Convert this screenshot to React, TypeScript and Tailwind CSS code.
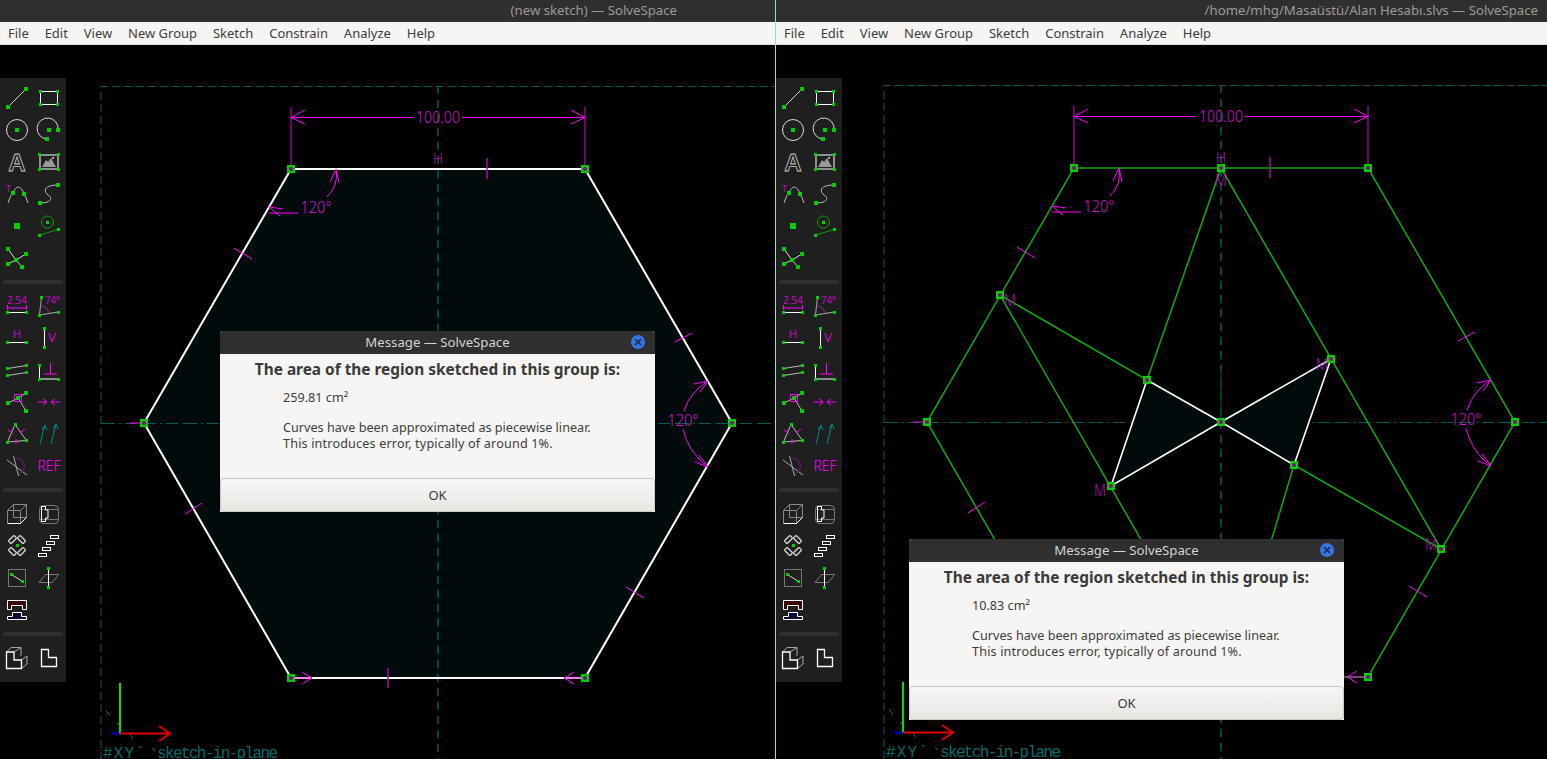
import type { ReactNode } from "react";

const G = "#00d000";
const MAG = "#ff00ff";
const DIM = "#b012b0";
const TEAL = "#0a5a5a";
const SANS = "'Noto Sans', 'Open Sans', sans-serif";

function H({ x, y, s = 4 }: { x: number; y: number; s?: number }) {
  return <rect x={x - s / 2} y={y - s / 2} width={s} height={s} fill={G} shapeRendering="crispEdges" />;
}

function L({ d, c = "#d8d8d8", w = 1 }: { d: string; c?: string; w?: number }) {
  return <path d={d} fill="none" stroke={c} strokeWidth={w} />;
}

function Lbl({ x, y, size, len, children, anchor = "middle" }: { x: number; y: number; size: number; len?: number; children: ReactNode; anchor?: "middle" | "start" }) {
  return (
    <text x={x} y={y} fontSize={size} fill={MAG} textAnchor={anchor} fontFamily="'Noto Sans', sans-serif" fontWeight={300} textLength={len} lengthAdjust="spacingAndGlyphs">
      {children}
    </text>
  );
}

const ICONS: (ReactNode | null)[] = [
  <><L d="M3 21L21 3" /><H x={3} y={21} /><H x={21} y={3} /></>,
  <><L d="M3.5 5.5H20.5V18.5H3.5Z" c="#fff" /><H x={3.5} y={5} s={3} /><H x={20.5} y={5} s={3} /><H x={3.5} y={18.5} s={3} /><H x={20.5} y={18.5} s={3} /></>,
  <><circle cx={12} cy={12} r={10.5} fill="none" stroke="#d8d8d8" /><H x={12} y={12} /></>,
  <><L d="M10 21A10.5 10.5 0 1 1 21 12" /><H x={12} y={12} /><H x={10} y={21} /><H x={21} y={12} /></>,
  <text x={12} y={21} fontSize={24} fontWeight={700} textAnchor="middle" fill="#1f1f1f" stroke="#c8c8c8" strokeWidth={0.8} fontFamily="'Liberation Sans', sans-serif">A</text>,
  <><path d="M5 17L9 10L11 12L14 8L19 17Z" fill="#9a9a9a" /><rect x={3} y={5} width={18} height={14} fill="none" stroke="#fff" /><rect x={15} y={7} width={2} height={2} fill="#aaa" /><H x={2.5} y={4.5} s={3} /><H x={21.5} y={4.5} s={3} /><H x={2.5} y={19.5} s={3} /><H x={21.5} y={19.5} s={3} /></>,
  <><Lbl x={3.5} y={10} size={9}>T</Lbl><L d="M3 21Q6 12 8 11C11 3 16 3 19 12Q21 15 23 21" c="#bbb" /><H x={8} y={11} /><H x={19} y={12} /></>,
  <><L d="M3 21C16 21 15 15 11 13C5 8 9 3 21 3" c="#bbb" /><H x={3} y={21} /><H x={21} y={3} /></>,
  <H x={12} y={12} s={6} />,
  <><circle cx={10.5} cy={8} r={6} fill="none" stroke="#0a9a0a" /><H x={10.5} y={8} s={3} /><L d="M2.5 21L21.5 15.5" c="#0a9a0a" /><H x={2.5} y={21} s={3} /><H x={21.5} y={15.5} s={3} /></>,
  <><L d="M3 3L11 14L3 18M11 14L21 8M11 14L17 21" /><H x={3} y={3} /><H x={21} y={8} /><H x={3} y={18} /><H x={17} y={21} /><H x={11} y={14} /></>,
  null,
  <><Lbl x={12} y={11} size={11} len={20}>2.54</Lbl><L d="M2.5 12V17M21.5 12V17M2.5 15H21.5" c={MAG} /><L d="M2.5 19.5H21.5" c="#fff" /><H x={2.5} y={19.5} s={3} /><H x={21.5} y={19.5} s={3} /></>,
  <><L d="M4.5 4L2.5 22L21.5 19" c="#aaa" /><path d="M3.5 13Q10 13 12 20" fill="none" stroke="#a020a0" /><Lbl x={8} y={11} size={11} len={15} anchor="start">74°</Lbl><H x={4.5} y={4} s={3} /><H x={2.5} y={22} s={3} /><H x={21.5} y={19} s={3} /></>,
  <><Lbl x={12} y={13} size={11}>H</Lbl><L d="M2.5 17.5H21.5" c="#fff" /><H x={2.5} y={17.5} s={3} /><H x={21.5} y={17.5} s={3} /></>,
  <><L d="M7.5 3.5V22.5" c="#fff" /><Lbl x={15} y={17} size={13}>V</Lbl><H x={7.5} y={3.5} s={3} /><H x={7.5} y={22.5} s={3} /></>,
  <><L d="M2.5 11.5L21.5 8.5M2.5 18.5L21.5 15.5" c="#bbb" /><H x={2.5} y={11.5} s={3} /><H x={21.5} y={8.5} s={3} /><H x={2.5} y={18.5} s={3} /><H x={21.5} y={15.5} s={3} /></>,
  <><L d="M2.5 8V22H21.5" c="#fff" /><L d="M7 17H20M13.5 6V17" c={MAG} /><H x={2.5} y={8} s={3} /><H x={2.5} y={22} s={3} /><H x={21.5} y={22} s={3} /></>,
  <><L d="M3 14L13 9L21 22M13 9L21 4" c="#bbb" /><rect x={9.5} y={5.5} width={7} height={7} fill="none" stroke={MAG} /><H x={13} y={9} /><H x={21} y={4} /><H x={3} y={14} /><H x={21} y={22} /></>,
  <><L d="M1 13H10M6 9.5L10 13L6 16.5M23 13H14M18 9.5L14 13L18 16.5" c={MAG} /></>,
  <><L d="M10 3.5L2.5 21L21.5 19.5Z" c="#bbb" /><L d="M3 9L8 12M15 12L20 8M11 18V23" c={MAG} /><H x={10.5} y={3.5} s={3} /><H x={2.5} y={21} s={3} /><H x={21.5} y={19.5} s={3} /></>,
  <><L d="M3 23L8 4M5 9L8 4L10 9M14 23L19 3M16 8L19 3L21 8" c="#008a8a" /></>,
  <><L d="M2 7L22 22M8.5 3L13.5 23" c="#aaa" /><path d="M12 5.5A8 8 0 0 1 14 21" fill="none" stroke="#901090" /></>,
  <Lbl x={12} y={18} size={15} len={23}>REF</Lbl>,
  <><L d="M2.5 8.5H15.5V21.5H2.5ZM8.5 2.5H21.5V15.5H8.5ZM2.5 8.5L8.5 2.5M15.5 8.5L21.5 2.5M15.5 21.5L21.5 15.5" c="#888" /><L d="M2.5 21.5H15.5L21.5 15.5" c="#fff" /></>,
  <><rect x={2.5} y={3.5} width={19} height={18} rx={4} fill="none" stroke="#777" /><L d="M2.5 7.5H21.5M2.5 17.5H21.5" c="#777" /><L d="M8.5 4.5H4.5V19.5H8.5V16H11V8H8.5Z" c="#fff" /></>,
  <><g fill="none" stroke="#d8d8d8" strokeWidth={1.3}><rect x={3.5} y={3.5} width={8} height={4} rx={1} transform="rotate(-45 7.5 5.5)" /><rect x={12.5} y={3.5} width={8} height={4} rx={1} transform="rotate(45 16.5 5.5)" /><rect x={3.5} y={15.5} width={8} height={4} rx={1} transform="rotate(45 7.5 17.5)" /><rect x={12.5} y={15.5} width={8} height={4} rx={1} transform="rotate(-45 16.5 17.5)" /></g><H x={12} y={11.5} s={3} /></>,
  <g fill="none" stroke="#fff"><rect x={13.5} y={1.5} width={8} height={3} /><rect x={9.5} y={7.5} width={8} height={3} /><rect x={5.5} y={13.5} width={8} height={3} /><rect x={1.5} y={19.5} width={8} height={3} /></g>,
  <><rect x={3.5} y={3.5} width={17} height={17} fill="none" stroke="#777" /><L d="M6.5 8.5L17.5 15.5" c="#ddd" /><H x={6.5} y={8.5} s={3} /><H x={17.5} y={15.5} s={3} /></>,
  <><path d="M8.7 8.5H21.7L15.3 16.5H2Z" fill="none" stroke="#777" /><L d="M11.5 2.5V21.5" c="#fff" /><H x={11.5} y={2.5} s={3} /><H x={11.5} y={21.5} s={3} /></>,
  <g stroke="#fff"><path d="M2.5 2.5H21.5V11.5H17.5V7.5H6.5V11.5H2.5Z" fill="#3a0808" /><path d="M7.5 14.5H16.5V18.5H21.5V21.5H2.5V18.5H7.5Z" fill="#08083a" /></g>,
  null,
  <><L d="M1.5 6L6 1.5H16V10" c="#aaa" /><L d="M16.5 22.5L22 18V10L16.5 14M9 6L16 1.5" c="#aaa" /><path d="M1.5 6H9V14H16.5V22.5H1.5Z" fill="none" stroke="#fff" strokeWidth={1.3} /></>,
  <path d="M4.5 3.5H11.5V11.5H19.5V20.5H4.5Z" fill="none" stroke="#fff" strokeWidth={1.3} />,
];

function IconGrid({ from, to }: { from: number; to: number }) {
  return (
    <div className="grid grid-cols-[32px_32px] auto-rows-[32px]">
      {ICONS.slice(from, to).map((icon, i) => (
        <div key={i} className="flex items-center justify-center">
          {icon && (
            <svg width={24} height={24} viewBox="0 0 24 24" className="overflow-visible">
              {icon}
            </svg>
          )}
        </div>
      ))}
    </div>
  );
}

function Toolbar() {
  return (
    <div className="absolute left-0 top-[33px] w-[66px] bg-[#1f1f1f] px-px pt-1 pb-2">
      <IconGrid from={0} to={12} />
      <div className="mx-[2px] mt-[6px] mb-[5px] h-1 bg-[#2f2f2f]" />
      <IconGrid from={12} to={24} />
      <div className="mx-[2px] mt-[7px] mb-[6px] h-1 bg-[#2f2f2f]" />
      <IconGrid from={24} to={32} />
      <div className="mx-[2px] mt-[6px] mb-[6px] h-1 bg-[#2f2f2f]" />
      <IconGrid from={32} to={34} />
    </div>
  );
}

function Handle({ x, y }: { x: number; y: number }) {
  return (
    <g>
      <rect x={x - 4} y={y - 4} width={8} height={8} fill={G} shapeRendering="crispEdges" />
      <circle cx={x} cy={y} r={2} fill="#8a0a8a" />
    </g>
  );
}

function Sk({ x, y, size = 17, len, c = DIM, children }: { x: number; y: number; size?: number; len?: number; c?: string; children: ReactNode }) {
  return (
    <text x={x} y={y} fontSize={size} fill={c} textAnchor="middle" fontFamily="'Noto Sans', sans-serif" fontWeight={300} textLength={len} lengthAdjust="spacingAndGlyphs">
      {children}
    </text>
  );
}

// same constraint drawing in both windows, left window coordinates
function Constraints({ edge, wide }: { edge: string; wide: boolean }) {
  return (
    <>
      <path d="M101 760V86.5H776" fill="none" stroke={TEAL} strokeDasharray="8 4" />
      <path d="M438 86V760" fill="none" stroke={TEAL} strokeWidth={1.5} strokeDasharray="8 6" />
      <path d="M101 423.5H776" fill="none" stroke={TEAL} strokeDasharray="14 4 2 4 12 5" />
      <path d="M291 169H585L732 423L585 678H291L144 423Z" fill="none" stroke={edge} strokeWidth={wide ? 2 : 1.6} />

      <path d="M291 107V169M585 107V169" stroke="#8a0a8a" strokeWidth={1.5} />
      <path d="M291 117.5H413M462 117.5H585M305 110L291 117.5L305 124M571 110L585 117.5L571 124" fill="none" stroke={MAG} />
      <Sk x={438} y={123} size={17} len={44} c="#d018d0">100.00</Sk>
      <Sk x={438} y={164} size={15} len={10}>H</Sk>
      <path d="M487 158V179" stroke="#a010a0" strokeWidth={1.5} />

      <path d="M298 213H269M269 207L283 209M269 207L280 216M327 197Q339 185 336 169M336 169L330 182M336 169L339 183" fill="none" stroke={MAG} />
      <Sk x={316} y={213} len={31} c="#d018d0">120°</Sk>

      <path d="M684 411Q690 392 708 381M708 381L694 384M708 381L700 392M683 429Q688 452 708 467M708 467L695 462M708 467L699 455" fill="none" stroke={MAG} />
      <Sk x={683} y={426} len={31} c="#d018d0">120°</Sk>

      <path d="M234 248L252 259M675 342L692 333M185 514L202 503M626 587L644 598" stroke={MAG} />
      <path d="M388 668V688" stroke="#a010a0" strokeWidth={1.5} />
      <path d="M291 678H312M302 672L312 678L302 684M585 678H564M574 672L564 678L574 684M130 423H144" fill="none" stroke={MAG} />

      <path d="M106 711L110 715M117 723L120 726M130 735L133 738M152 748L155 751" stroke="#3a6a6a" />
      <path d="M111 733.5H120" stroke="#0000d0" strokeWidth={2} />
      <path d="M120 683V733" stroke="#00e000" strokeWidth={2} />
      <path d="M120 733.5H169M159 726L170 733.5L159 741" fill="none" stroke="#e00000" strokeWidth={2} />
      <text x={103} y={758} fontSize={16} fill="#0a6a6a" fontFamily="'Liberation Mono', monospace" textLength={42}>#XY`</text>
      <text x={157} y={758} fontSize={16} fill="#0a6a6a" fontFamily="'Liberation Mono', monospace" textLength={121}>sketch-in-plane</text>

      <Handle x={291} y={169} />
      <Handle x={585} y={169} />
      <Handle x={732} y={423} />
      <Handle x={585} y={678} />
      <Handle x={291} y={678} />
      <Handle x={144} y={423} />
    </>
  );
}

function LeftSketch() {
  return (
    <svg className="absolute inset-0" width={775} height={714} viewBox="0 45 775 714">
      <path d="M291 169H585L732 423L585 678H291L144 423Z" fill="#020b0c" />
      <Constraints edge="#ffffff" wide />
    </svg>
  );
}

function RightSketch() {
  return (
    <svg className="absolute inset-0" width={771} height={714} viewBox="776 45 771 714">
      <g transform="translate(783 -1)">
        <Constraints edge="#14a014" wide={false} />
      </g>
      <path d="M1221 422V370" stroke="#004000" strokeWidth={1.5} />
      <path d="M1221 422H1272M1263 415L1272 422L1263 429" fill="none" stroke="#600000" />
      <path d="M1147 380L1221 422L1331 359L1294 465L1221 422L1111 486Z" fill="#020b0c" />
      <path d="M1000 295L1147 380M1221 168L1147 380M1221 168L1441 549M1000 295L1147 550M1294 465L1441 549M1294 465L1270 545" fill="none" stroke="#14a014" strokeWidth={1.6} />
      <path d="M1147 380L1221 422L1331 359L1294 465L1221 422L1111 486Z" fill="none" stroke="#fff" strokeWidth={1.6} />
      <Handle x={1000} y={295} />
      <Handle x={1147} y={380} />
      <Handle x={1221} y={168} />
      <Handle x={1221} y={422} />
      <Handle x={1331} y={359} />
      <Handle x={1294} y={465} />
      <Handle x={1111} y={486} />
      <Handle x={1441} y={549} />
      <Sk x={1010} y={306} len={12}>M</Sk>
      <Sk x={1221} y={186} len={12}>M</Sk>
      <Sk x={1322} y={370} len={12}>M</Sk>
      <Sk x={1100} y={496} len={12}>M</Sk>
      <Sk x={1431} y={550} len={12}>M</Sk>
    </svg>
  );
}

function Dialog({ area, className }: { area: string; className: string }) {
  return (
    <div className={`absolute flex h-[181px] w-[435px] flex-col overflow-hidden rounded-t-[3px] bg-[#f6f5f4] ${className}`}>
      <div className="relative flex h-[23px] items-center justify-center bg-[#2f2f2f] text-[13.2px] text-[#d6d5d2]">
        Message — SolveSpace
        <span className="absolute right-[10px] top-[4px] flex h-[14px] w-[14px] items-center justify-center rounded-full bg-[#3574e2]">
          <svg width={8} height={8} viewBox="0 0 8 8">
            <path d="M1 1L7 7M7 1L1 7" stroke="#1d2a44" strokeWidth={1.6} />
          </svg>
        </span>
      </div>
      <div className="mt-[6px] text-center text-[15.4px] font-bold leading-5 text-[#3a3a3a]">The area of the region sketched in this group is:</div>
      <div className="mt-[9px] pl-[63px] text-[12.65px] leading-4 text-[#3d3d3d]">
        <p>{area}</p>
        <p className="mt-[14px]">Curves have been approximated as piecewise linear.</p>
        <p className="tracking-[0.15px]">This introduces error, typically of around 1%.</p>
      </div>
      <button className="mt-auto h-[34px] rounded-[4px] border border-[#cdc7c2] bg-gradient-to-b from-[#f7f6f5] to-[#e8e6e3] pt-px text-[13px] text-[#3a3a3a]">OK</button>
    </div>
  );
}

function SsWindow({ title, titleClass, className, sketch, dialog }: { title: string; titleClass: string; className: string; sketch: ReactNode; dialog: ReactNode }) {
  const menus = ["File", "Edit", "View", "New Group", "Sketch", "Constrain", "Analyze", "Help"];
  return (
    <div className={`flex h-full flex-col ${className}`} style={{ fontFamily: SANS }}>
      <div className={`flex h-[22px] shrink-0 items-center justify-end bg-[#2f2f2f] text-[13.2px] text-[#9c9a96] ${titleClass}`}>{title}</div>
      <div className="flex h-[23px] shrink-0 items-center gap-[15.85px] border-b border-[#dedcd9] bg-[#f6f5f4] pl-2 pt-[2px] text-[13px] text-[#3d3d3d]">
        {menus.map((m) => (
          <span key={m}>{m}</span>
        ))}
      </div>
      <div className="relative flex-1 overflow-hidden bg-black">
        {sketch}
        <Toolbar />
        {dialog}
      </div>
    </div>
  );
}

export default function App() {
  return (
    <div className="flex h-[759px] w-[1547px] overflow-hidden bg-black">
      <SsWindow
        className="w-[775px]"
        title="(new sketch) — SolveSpace"
        titleClass="pr-[98px]"
        sketch={<LeftSketch />}
        dialog={<Dialog area="259.81 cm²" className="left-[220px] top-[286px]" />}
      />
      <div className="w-px shrink-0 bg-[#86e8bc]" />
      <SsWindow
        className="w-[771px]"
        title="/home/mhg/Masaüstü/Alan Hesabı.slvs — SolveSpace"
        titleClass="pr-[9px]"
        sketch={<RightSketch />}
        dialog={<Dialog area="10.83 cm²" className="left-[133px] top-[494px]" />}
      />
    </div>
  );
}
